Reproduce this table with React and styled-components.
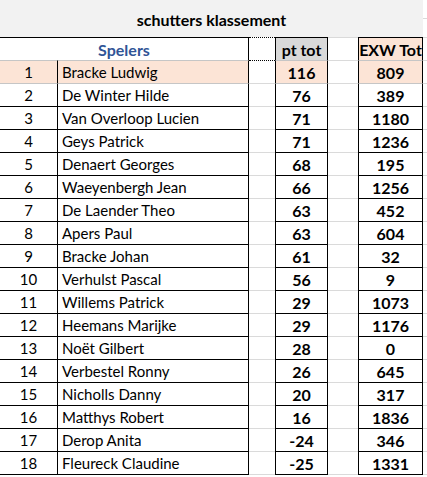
import React from 'react'
import styled, { createGlobalStyle, css } from 'styled-components'

const GlobalStyle = createGlobalStyle`
  html, body {
    margin: 0;
    padding: 0;
    background: #ffffff;
  }
  body {
    font-family: Lato, "Liberation Sans", sans-serif;
    color: #000;
  }
`

const colors = {
  black: '#000000',
  grid: '#dadada',
  soft: '#c6c6c6',
  peach: '#fce4d6',
  grey: '#d9d9d9',
  title: '#f2f2f2',
  blue: '#305496',
}

const players = [
  ['Bracke Ludwig', 116, 809],
  ['De Winter Hilde', 76, 389],
  ['Van Overloop Lucien', 71, 1180],
  ['Geys Patrick', 71, 1236],
  ['Denaert Georges', 68, 195],
  ['Waeyenbergh Jean', 66, 1256],
  ['De Laender Theo', 63, 452],
  ['Apers Paul', 63, 604],
  ['Bracke Johan', 61, 32],
  ['Verhulst Pascal', 56, 9],
  ['Willems Patrick', 29, 1073],
  ['Heemans Marijke', 29, 1176],
  ['Noët Gilbert', 28, 0],
  ['Verbestel Ronny', 26, 645],
  ['Nicholls Danny', 20, 317],
  ['Matthys Robert', 16, 1836],
  ['Derop Anita', -24, 346],
  ['Fleureck Claudine', -25, 1331],
]

const Sheet = styled.div`
  width: 427px;
  height: 477px;
  overflow: hidden;
  display: flex;
  flex-direction: column;
`

const Row = styled.div`
  display: grid;
  grid-template-columns: 58px 191px 26px 53px 30px 65px 1fr;
  height: ${p => p.$height || 23}px;
`

const TitleRow = styled(Row)`
  height: 37px;
`

const TitleCell = styled.div`
  grid-column: 1 / 7;
  background: ${colors.title};
  display: flex;
  align-items: center;
  justify-content: center;
  font-weight: 700;
  font-size: 16px;
  padding-top: 1px;
`

const Edge = styled.div`
  border-bottom: 1px solid ${colors.grid};
  height: 18px;
`

const cellBase = css`
  box-sizing: border-box;
  display: flex;
  align-items: center;
  font-size: 16px;
  border-top: 1px solid ${p => p.$line || colors.black};
  border-bottom: ${p => (p.$last ? `1px solid ${colors.black}` : 'none')};
  background: ${p => p.$bg || 'transparent'};
`

const SpelersCell = styled.div`
  ${cellBase};
  grid-column: 1 / 3;
  justify-content: center;
  border-right: 1px solid ${colors.black};
  color: ${colors.blue};
  font-weight: 700;
`

const NumCell = styled.div`
  ${cellBase};
  font-size: 15px;
  justify-content: center;
  border-right: 1px solid ${colors.black};
`

const NameCell = styled.div`
  ${cellBase};
  font-size: 15px;
  padding-left: 4px;
  border-right: 1px solid ${colors.black};
  white-space: nowrap;
`

const Gap = styled.div`
  box-sizing: border-box;
  border-top: 1px ${p => (p.$dotted ? 'dotted' : 'solid')}
    ${p => (p.$dotted ? colors.black : colors.grid)};
  border-bottom: ${p => (p.$last ? `1px solid ${colors.grid}` : 'none')};
`

const ScoreCell = styled.div`
  ${cellBase};
  justify-content: center;
  font-weight: 700;
  border-left: 1px solid ${colors.black};
  border-right: 1px solid ${colors.black};
`

const rowLine = i => (i < 2 ? colors.soft : colors.black)

export default function App() {
  return (
    <>
      <GlobalStyle />
      <Sheet>
        <TitleRow>
          <TitleCell>schutters klassement</TitleCell>
          <Edge />
        </TitleRow>
        <Row>
          <SpelersCell>Spelers</SpelersCell>
          <Gap $dotted />
          <ScoreCell $bg={colors.grey}>pt tot</ScoreCell>
          <Gap />
          <ScoreCell $bg={colors.peach}>EXW Tot</ScoreCell>
          <Gap />
        </Row>
        {players.map(([name, pt, exw], i) => {
          const last = i === players.length - 1
          const bg = i === 0 ? colors.peach : undefined
          const line = rowLine(i)
          return (
            <Row key={name} $height={last ? 24 : 23}>
              <NumCell $line={line} $bg={bg} $last={last}>{i + 1}</NumCell>
              <NameCell $line={line} $bg={bg} $last={last}>{name}</NameCell>
              <Gap $dotted={i === 0} $last={last} />
              <ScoreCell $line={line} $bg={bg} $last={last}>{pt}</ScoreCell>
              <Gap $last={last} />
              <ScoreCell $line={line} $bg={bg} $last={last}>{exw}</ScoreCell>
              <Gap $last={last} />
            </Row>
          )
        })}
      </Sheet>
    </>
  )
}
